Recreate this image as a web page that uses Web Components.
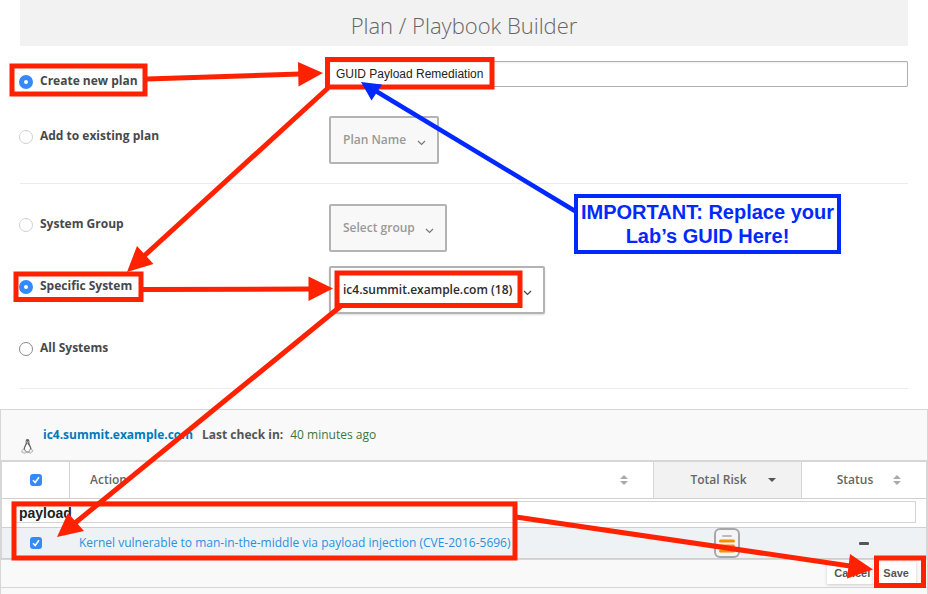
<!DOCTYPE html>
<html lang="en">
<head>
<meta charset="utf-8">
<title>Plan / Playbook Builder</title>
<style>
body { margin: 0; background: #fff; font: 12px/20px "Open Sans", "Liberation Sans", sans-serif; color: #47484c; }
</style>
</head>
<body>
<playbook-builder></playbook-builder>

<template id="t-builder">
<style>
:host { display: block; position: relative; overflow: hidden; }
h1 { margin: 0 20px; padding: 10px 0 6px; background: #f2f2f2; color: #666; font-size: 22px; line-height: 30px; font-weight: 300; text-align: center; }
form { margin: 0 20px; }
.group { display: flex; flex-direction: column; gap: 14px; padding: 20px 0 19px; border-bottom: 1px solid #ececec; }
.group:first-child { padding-top: 15px; }
.name { box-sizing: border-box; width: 100%; height: 26px; padding: 0 6px; border: 1px solid #b0b0b0; border-radius: 1px; box-shadow: inset 0 1px 2px #eee; font: 12px "Liberation Sans", Arial, sans-serif; color: #222; }
system-panel { margin-top: 20px; }
</style>
<h1>Plan / Playbook Builder</h1>
<form>
  <div class="group">
    <choice-row label="Create new plan" group="plan" checked><input class="name" aria-label="Plan name" value="GUID Payload Remediation"></choice-row>
    <choice-row label="Add to existing plan" group="plan" muted><drop-down text="Plan Name" disabled></drop-down></choice-row>
  </div>
  <div class="group">
    <choice-row label="System Group" group="scope" muted><drop-down text="Select group" disabled></drop-down></choice-row>
    <choice-row label="Specific System" group="scope" checked><drop-down text="ic4.summit.example.com (18)"></drop-down></choice-row>
    <choice-row label="All Systems" group="scope"></choice-row>
  </div>
</form>
<system-panel></system-panel>
<guide-overlay></guide-overlay>
</template>

<template id="t-choice">
<style>
:host { display: grid; grid-template-columns: 309px 1fr; align-items: start; }
label { display: flex; gap: 7px; padding: 10px 0 11px; font-weight: 700; line-height: 20px; color: #47484c; }
input { appearance: none; box-sizing: border-box; flex: none; width: 14px; height: 14px; margin: 4px 0 0; margin-inline-start: -1px; border: 1px solid #8a8a8a; border-radius: 50%; background: #fff; }
:host([muted]) input { border-color: #d2d2d2; }
input:checked { border: 5px solid #3489fb; }
</style>
<label><input type="radio"><span></span></label>
<slot></slot>
</template>

<template id="t-drop">
<style>
:host { display: inline-grid; justify-self: start; width: max-content; }
select { appearance: none; grid-area: 1 / 1; box-sizing: border-box; height: 48px; padding: 0 30px 2px 12px; border: 2px solid #b3b3b3; border-radius: 2px; background: #fff; box-shadow: 0 1px 2px #ddd; font: 600 12px "Open Sans", sans-serif; color: #2b2b2b; opacity: 1; }
select:disabled { background: #f8f8f8; color: #999; box-shadow: none; }
svg { grid-area: 1 / 1; place-self: center end; margin: 5px 13px 0 0; width: 9px; height: 6px; fill: none; stroke: #444; stroke-width: 1.200; pointer-events: none; }
:host([disabled]) svg { stroke: #777; }
</style>
<select><option></option></select>
<svg viewBox="0 0 9 6"><path d="M1 1 4.500 4.500 8 1"/></svg>
</template>

<template id="t-sort">
<style>
:host { display: block; width: 8px; height: 12px; flex: none; }
svg { display: block; fill: #aaa; }
.down.on { fill: #555; }
</style>
<svg width="8" height="12" viewBox="0 0 8 12"><path class="up" d="M0 5 4 1 8 5Z"/><path class="down" d="M0 7H8L4 11Z"/></svg>
</template>

<template id="t-panel">
<style>
:host { display: block; }
section { border: 1px solid #d6d6d6; background: #f9f9f9; }
header { display: flex; align-items: center; height: 20px; padding: 15px 20px; line-height: 20px; }
header svg { margin: 22px 9px 0 0; flex: none; width: 13px; height: 16px; }
header a { color: #0079be; font-weight: 700; text-decoration: none; margin-right: 9px; }
header b { margin-right: 7px; color: #555; }
time { color: #3c763d; }
table { width: 100%; border-collapse: separate; border-spacing: 0; table-layout: fixed; border: 1px solid #d6d6d6; border-top: 2px solid #d6d6d6; background: #fff; }
.c1 { width: 67px; } .c3 { width: 148px; } .c4 { width: 125px; }
th, td { padding: 0; height: 36px; border-bottom: 1px solid #cfcfcf; text-align: center; }
th { font-weight: 600; color: #666; }
th + th { border-left: 1px solid #d6d6d6; }
th:first-child + th { text-align: left; }
th div { display: flex; align-items: center; gap: 5px; padding: 0 25px 0 20px; }
th span { flex: 1; }
th.sorted { background: #f2f2f2; }
.filter td { height: 28px; }
.filter input { display: block; box-sizing: border-box; width: calc(100% - 20px); height: 22px; margin: -2px 10px 0; padding: 2px 6px 0; border: 1px solid #d3d3d3; font: 700 14px "Liberation Sans", Arial, sans-serif; color: #222; }
.item td { height: 30px; line-height: 18px; background: #eef2f5; }
.item td + td { padding-left: 10px; text-align: left; }
.item td + td + td { padding: 0; text-align: center; }
.item a { color: #2c90e0; text-decoration: none; white-space: nowrap; }
.item svg { display: block; margin: auto; }
input[type=checkbox] { appearance: none; display: block; width: 12px; height: 12px; margin: 0 auto; border-radius: 3px; background: #3489fb url("data:image/svg+xml,%3Csvg xmlns='http://www.w3.org/2000/svg' viewBox='0 0 12 12'%3E%3Cpath d='M3 6.300 5.200 8.500 9 3.200' fill='none' stroke='white' stroke-width='1.600'/%3E%3C/svg%3E"); }
footer { display: flex; justify-content: flex-end; height: 22px; padding: 2px 11px 3px; }
button { height: 22px; border: 0; padding: 0 3px 0 7px; background: #fff; box-shadow: 0 1px 3px #ccc; font: 700 11px "Liberation Sans", Arial, sans-serif; color: #555; }
button + button { padding: 0 7px 0 10px; }
.next { height: 20px; border-top: 0; margin-bottom: -15px; }
</style>
<section>
  <header>
    <svg viewBox="0 0 13 16"><path d="M6.500 1C4.500 1 4.600 3 4.700 5 4.500 6.700 2.700 8.500 2.500 11.500L5 14.500H8.500L10.700 11.500C10.400 8.500 8.500 6.700 8.400 5 8.500 3 8.500 1 6.500 1Z" fill="#666"/><path d="M6.300 5.300C5.500 7.200 3.800 9 4 11.500L5.500 13.500H8L9.200 11.500C9.400 9 7.300 7.200 6.300 5.300Z" fill="#fff"/><path d="M2.600 11 .8 12.500 1 14.500 4.300 15.200 5.400 14ZM10.500 11.200 12 13 9.200 15.200 8 14.500 8.600 11.500Z" fill="#eee" stroke="#999" stroke-width=".7"/><path d="M5.300 3.700 6.500 4.600 7.600 3.700" fill="none" stroke="#ddd"/></svg>
    <a href="#">ic4.summit.example.com</a><b>Last check in:</b><time>40 minutes ago</time>
  </header>
  <table>
    <colgroup><col class="c1"><col><col class="c3"><col class="c4"></colgroup>
    <thead>
      <tr><th><input type="checkbox" checked aria-label="Select all"></th><th><div><span>Action</span><sort-mark></sort-mark></div></th><th class="sorted"><div><span>Total Risk</span><sort-mark active></sort-mark></div></th><th><div><span>Status</span><sort-mark></sort-mark></div></th></tr>
    </thead>
    <tbody>
      <tr class="filter"><td colspan="4"><input aria-label="Filter actions" value="payload"></td></tr>
      <tr class="item"><td><input type="checkbox" checked aria-label="Select action"></td><td><a href="#">Kernel vulnerable to man-in-the-middle via payload injection (CVE-2016-5696)</a></td>
      <td><svg width="26" height="30" viewBox="0 0 26 30"><rect x="1" y="1" width="24" height="28" rx="5" fill="#f3f5f6" stroke="#a5a7a9" stroke-width="2"/><path d="M9 8H17" stroke="#bbb" stroke-width="2" stroke-linecap="round"/><path d="M6.500 13H19.500M6.500 18H19.500M6.500 23H19.500" stroke="#f39200" stroke-width="3" stroke-linecap="round"/></svg></td>
      <td><svg width="10" height="3" viewBox="0 0 10 3"><rect width="10" height="3" rx="1" fill="#555"/></svg></td></tr>
    </tbody>
  </table>
  <footer><button type="button">Cancel</button><button type="button">Save</button></footer>
</section>
<section class="next"></section>
</template>

<template id="t-guide">
<style>
:host { position: absolute; inset: 0; pointer-events: none; }
svg { position: absolute; left: 0; top: 0; }
p { position: absolute; left: 574px; top: 194px; box-sizing: border-box; width: 267px; height: 60px; margin: 0; padding-top: 2px; border: 4px solid #0029ff; background: #fff; color: #0029ff; font: 700 20px/24px "Liberation Sans", Arial, sans-serif; text-align: center; white-space: nowrap; }
</style>
<svg width="928" height="594" viewBox="0 0 928 594">
  <g fill="none" stroke="#ff2200" stroke-width="5">
    <rect x="12" y="66" width="133" height="28"/><rect x="327.500" y="59.500" width="164.500" height="27.500"/>
    <rect x="16" y="274" width="125" height="25.500"/><rect x="337" y="273" width="183" height="32.500"/>
    <rect x="14" y="504" width="501" height="54"/><rect x="876.500" y="558" width="47" height="27.500"/>
    <path d="M147 79 300 74M328 88 144 256M143 289.500 310 289M341 306 75 523M516 517 850 566"/>
  </g>
  <path fill="#ff2200" d="M323 73 298 62 298.500 86.500ZM127 272 137 246 153.500 264ZM333 288.500 308.500 276.500V301ZM57 537 68 513 84 531ZM873 569.500 850 554 847 578.500Z"/>
  <path d="M575 211 375 90.500" stroke="#0029ff" stroke-width="4.500"/><path fill="#0029ff" d="M361 82 382 84.500 371.500 100.500Z"/>
</svg>
<p>IMPORTANT: Replace your<br>Lab’s GUID Here!</p>
</template>

<script>
class Base extends HTMLElement {
  constructor(id) {
    super();
    this.attachShadow({ mode: "open" }).append(document.getElementById(id).content.cloneNode(true));
  }
}
customElements.define("sort-mark", class extends Base {
  constructor() { super("t-sort"); }
  connectedCallback() {
    if (this.hasAttribute("active")) {
      this.shadowRoot.querySelector(".up")?.remove();
      const d = this.shadowRoot.querySelector(".down");
      d.setAttribute("d", "M0 4H8L4 8Z");
      d.classList.add("on");
    }
  }
});
customElements.define("drop-down", class extends Base {
  constructor() { super("t-drop"); }
  connectedCallback() {
    const s = this.shadowRoot.querySelector("select");
    s.options[0].textContent = this.getAttribute("text");
    s.setAttribute("aria-label", this.getAttribute("text"));
    s.disabled = this.hasAttribute("disabled");
  }
});
customElements.define("choice-row", class extends Base {
  constructor() { super("t-choice"); }
  connectedCallback() {
    const r = this.shadowRoot.querySelector("input");
    r.name = this.getAttribute("group");
    r.checked = this.hasAttribute("checked");
    this.shadowRoot.querySelector("span").textContent = this.getAttribute("label");
  }
});
customElements.define("system-panel", class extends Base { constructor() { super("t-panel"); } });
customElements.define("guide-overlay", class extends Base { constructor() { super("t-guide"); } });
customElements.define("playbook-builder", class extends Base { constructor() { super("t-builder"); } });
</script>
</body>
</html>
